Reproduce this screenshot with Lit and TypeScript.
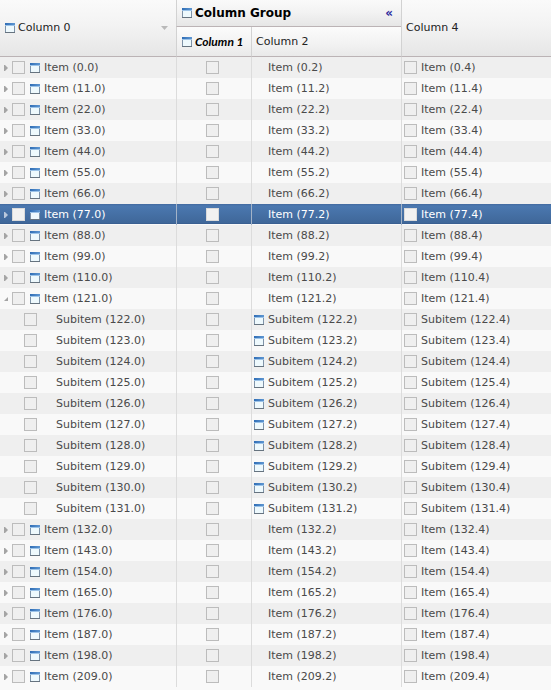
import { LitElement, html, css, svg, nothing } from "lit";
import { customElement, state } from "lit/decorators.js";

interface Row {
  id: number;
  parent?: number;
}

const ids = (from: number, to: number, step: number): number[] => {
  const out: number[] = [];
  for (let i = from; i <= to; i += step) out.push(i);
  return out;
};

const PARENT = 121;
const rows: Row[] = [
  ...ids(0, 121, 11).map((id) => ({ id })),
  ...ids(122, 131, 1).map((id) => ({ id, parent: PARENT })),
  ...ids(132, 209, 11).map((id) => ({ id })),
];

@customElement("window-icon")
export class WindowIcon extends LitElement {
  static styles = css`
    :host { display: block; flex: none; width: 10px; height: 10px; }
    svg { display: block; }
  `;
  render() {
    return html`<svg width="10" height="10" viewBox="0 0 10 10" aria-hidden="true" shape-rendering="crispEdges">
      <defs>
        <linearGradient id="bar" x1="0" x2="1" y1="0" y2="0">
          <stop offset="0" stop-color="#2f6db5" />
          <stop offset="1" stop-color="#5f97d2" />
        </linearGradient>
      </defs>
      ${svg`<rect width="10" height="10" fill="#7f93a8" />
      <rect x="1" y="3" width="8" height="6" fill="#eef9fd" />
      <rect width="10" height="2" fill="url(#bar)" />
      <rect y="2" width="10" height="1" fill="#9cc3e8" />
      <rect y="9" width="10" height="1" fill="#66737f" />`}
    </svg>`;
  }
}

@customElement("app-root")
export class AppRoot extends LitElement {
  @state() private open = true;
  @state() private selected = 77;

  static styles = css`
    :host {
      display: block;
      min-height: 100vh;
      background: #f9f9f9;
      color: #4a4a4a;
      font: 11px/20px Verdana, "DejaVu Sans", sans-serif;
      overflow-x: hidden;
    }
    table {
      width: 100%;
      table-layout: fixed;
      border-collapse: separate;
      border-spacing: 0;
    }
    .c0 { width: 176px; }
    .c1 { width: 75px; }
    .c2 { width: 150px; }
    th, td { padding: 0; white-space: nowrap; overflow: hidden; }
    th {
      box-sizing: border-box;
      text-align: left;
      font-weight: normal;
      color: #222;
      vertical-align: middle;
      background: linear-gradient(#fafafa, #f3f3f3 45%, #e6e6e6);
      border-bottom: 1px solid #bbb3b5;
    }
    th + th, .sub th { border-left: 1px solid #d2d2d2; }
    .top { height: 27px; }
    .sub { height: 30px; }
    .sub th { background: linear-gradient(#fbfbfb, #f2f2f2 60%, #e9e9e9); }
    .head { display: flex; align-items: center; gap: 3px; padding: 0 8px 0 5px; line-height: 22px; }
    .head.plain { padding-left: 4px; }
    .grow { flex: 1; }
    .group { font-weight: bold; font-size: 12px; color: #000; }
    .script { font-family: "Comic Sans MS", Lato, sans-serif; font-style: italic; font-weight: bold; font-size: 12px; color: #000; }
    .sort { width: 7px; height: 4px; background: #b9b9b9; clip-path: polygon(0 0, 100% 0, 50% 100%); }
    button { border: 0; padding: 0; background: none; font: inherit; color: inherit; cursor: pointer; }
    .collapse { font-weight: bold; font-size: 12px; color: #2a2a9c; line-height: 16px; }
    td { height: 21px; }
    td + td { border-left: 1px solid #dcdcdc; }
    tbody tr:nth-child(odd) { background: #efefef; }
    tbody tr.selected {
      color: #fff;
      background: linear-gradient(#426a9f, #4b78b0 2px, #3f6799 19px, #35588a 20px, #f9f9f9 20px);
    }
    .selected td { border-color: #a3b3c8; }
    .selected td:first-child { border-color: transparent; }
    .cell { display: flex; align-items: center; height: 21px; line-height: 22px; }
    .tree { padding-left: 4px; }
    .tree.child { padding-left: 24px; }
    .tree .box { margin-right: 5px; }
    .tree.child .box { margin-right: 19px; }
    .tree window-icon { margin-right: 4px; }
    .tick { justify-content: center; padding-right: 4px; }
    .text { padding-left: 16px; }
    .text.icon { padding-left: 2px; gap: 4px; }
    .last { padding-left: 2px; gap: 4px; }
    .toggle { display: flex; width: 8px; height: 12px; align-items: center; }
    .toggle svg { display: block; fill: #a4a4a4; }
    .selected .toggle svg { fill: #b9c8dc; }
    .box {
      appearance: none;
      flex: none;
      box-sizing: border-box;
      width: 13px;
      height: 13px;
      margin: 0;
      border: 1px solid #bcbcbc;
      background: #efefef;
    }
    .box:checked { background: #8ba8cc; }
    .selected .box { border-color: #dadada; background: #f1f1f1; }
  `;

  private box(id: number, col: number) {
    return html`<input class="box" type="checkbox" aria-label="Select ${id}.${col}" />`;
  }

  private row(r: Row) {
    const child = r.parent !== undefined;
    const name = child ? "Subitem" : "Item";
    const expanded = r.id === PARENT && this.open;
    return html`<tr class=${r.id === this.selected ? "selected" : ""} @click=${() => (this.selected = r.id)}>
      <td>
        <div class="cell tree ${child ? "child" : ""}">
          ${child
            ? nothing
            : html`<button
                class="toggle"
                aria-label="Toggle ${name} ${r.id}"
                aria-expanded=${expanded}
                @click=${() => r.id === PARENT && (this.open = !this.open)}
              >
                <svg width="5" height="6" viewBox="0 0 5 6" aria-hidden="true">
                  <path d=${expanded ? "M4 1V5H0Z" : "M0 0H1L4 3L1 6H0Z"} />
                </svg>
              </button>`}
          ${this.box(r.id, 0)}${child ? nothing : html`<window-icon></window-icon>`}
          <span>${name} (${r.id}.0)</span>
        </div>
      </td>
      <td><div class="cell tick">${this.box(r.id, 1)}</div></td>
      <td>
        <div class="cell text ${child ? "icon" : ""}">
          ${child ? html`<window-icon></window-icon>` : nothing}<span>${name} (${r.id}.2)</span>
        </div>
      </td>
      <td><div class="cell last">${this.box(r.id, 4)}<span>${name} (${r.id}.4)</span></div></td>
    </tr>`;
  }

  render() {
    return html`<table>
      <colgroup>
        <col class="c0" />
        <col class="c1" />
        <col class="c2" />
        <col />
      </colgroup>
      <thead>
        <tr class="top">
          <th rowspan="2" scope="col">
            <div class="head"><window-icon></window-icon><span class="grow">Column 0</span><span class="sort"></span></div>
          </th>
          <th colspan="2" scope="colgroup">
            <div class="head">
              <window-icon></window-icon><span class="grow group">Column Group</span>
              <button class="collapse" aria-label="Collapse column group">«</button>
            </div>
          </th>
          <th rowspan="2" scope="col"><div class="head plain">Column 4</div></th>
        </tr>
        <tr class="sub">
          <th scope="col"><div class="head"><window-icon></window-icon><span class="script">Column 1</span></div></th>
          <th scope="col"><div class="head plain">Column 2</div></th>
        </tr>
      </thead>
      <tbody>
        ${rows.filter((r) => this.open || r.parent === undefined).map((r) => this.row(r))}
      </tbody>
    </table>`;
  }
}
